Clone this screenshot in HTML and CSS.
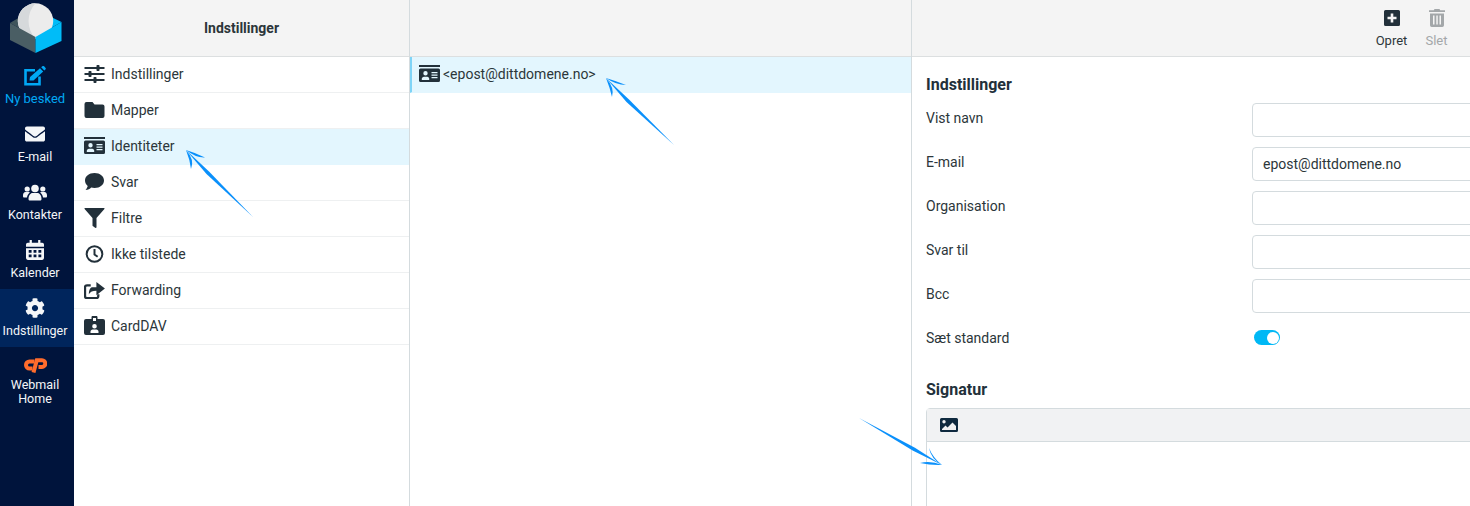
FILE: index.html
```html
<!DOCTYPE html>
<html lang="da">
<head>
<meta charset="utf-8">
<title>Indstillinger</title>
<link rel="stylesheet" href="styles.css">
</head>
<body>
<div class="app">
  <nav class="rail">
    <div class="logo">
      <svg viewBox="0 0 54 54" width="54" height="54">
        <path d="M2 23 12 17H27.500V37Z" fill="#3f545b"/>
        <path d="M53.500 22 43 17H27.500V37Z" fill="#00bcf8"/>
        <circle cx="27.500" cy="21" r="17.700" fill="#ececec"/>
        <path d="M27.500 3.300a17.700 17.700 0 0 0 0 35.400 26 26 0 0 1 0-35.400Z" fill="#d6d9db"/>
        <path d="M2 23 27.500 37V53L2 40Z" fill="#4a5e64"/>
        <path d="M53.500 22 27.500 37V53L53.500 41Z" fill="#00bcf8"/>
      </svg>
    </div>
    <a class="rail-item compose">
      <svg class="rail-icon" viewBox="0 0 24 20" width="24" height="20"><path d="M12 4.200H2.500v14h14V10.500" fill="none" stroke="currentColor" stroke-width="2.600"/><path d="M6.500 14.500 7 11 17 2.200 20.200 5.600 10.500 14.500Z M18.200 1.200 19.300.3a1.300 1.300 0 0 1 1.800 0l1.300 1.400a1.300 1.300 0 0 1 0 1.800l-1.100 1Z" fill="currentColor"/></svg>
      <span>Ny besked</span>
    </a>
    <a class="rail-item">
      <svg class="rail-icon" viewBox="0 0 512 512" width="20" height="20"><path fill="currentColor" d="M502.300 190.800c3.900-3.100 9.700-.2 9.700 4.700V400c0 26.500-21.500 48-48 48H48c-26.500 0-48-21.500-48-48V195.600c0-5 5.700-7.800 9.700-4.700 22.400 17.400 52.100 39.500 154.100 113.600 21.100 15.400 56.700 47.800 92.200 47.600 35.700.3 72-32.800 92.300-47.600 102-74.100 131.600-96.300 154-113.700zM256 320c23.200.4 56.600-29.200 73.400-41.400 132.700-96.300 142.800-104.700 173.400-128.700 5.800-4.500 9.200-11.500 9.200-18.900v-19c0-26.500-21.500-48-48-48H48C21.500 64 0 85.500 0 112v19c0 7.400 3.400 14.300 9.200 18.900 30.600 23.900 40.700 32.400 173.400 128.700 16.800 12.200 50.200 41.800 73.400 41.400z"/></svg>
      <span>E-mail</span>
    </a>
    <a class="rail-item">
      <svg class="rail-icon" viewBox="0 0 24 20" width="24" height="20"><g fill="currentColor"><circle cx="12" cy="6.500" r="3.800"/><circle cx="4.200" cy="7" r="2.600"/><circle cx="19.800" cy="7" r="2.600"/><path d="M5.500 17c0-3.500 2-6 4-6h5c2 0 4 2.500 4 6 0 1-.7 1.500-1.500 1.500H7c-.8 0-1.500-.5-1.500-1.500Z"/><path d="M0 13.500c0-2 1-3.500 2.500-3.500h3c.6 0 1.100.2 1.500.5-1.700 1-2.800 3-3 5H1.200C.5 15.500 0 15 0 14.200Z"/><path d="M24 13.500c0-2-1-3.500-2.500-3.500h-3c-.6 0-1.100.2-1.500.5 1.700 1 2.800 3 3 5h2.800c.7 0 1.200-.5 1.200-1.300Z"/></g></svg>
      <span>Kontakter</span>
    </a>
    <a class="rail-item">
      <svg class="rail-icon" viewBox="0 0 20 22" width="18" height="20"><path fill="currentColor" fill-rule="evenodd" d="M4 0h2.500v3h7V0H16v3h2a2 2 0 0 1 2 2v2.500H0V5a2 2 0 0 1 2-2h2ZM0 9h20v11a2 2 0 0 1-2 2H2a2 2 0 0 1-2-2ZM3 11v3h3.200v-3Zm5.400 0v3h3.200v-3Zm5.400 0v3H17v-3ZM3 16v3h3.200v-3Zm5.400 0v3h3.200v-3Zm5.400 0v3H17v-3Z"/></svg>
      <span>Kalender</span>
    </a>
    <a class="rail-item active">
      <svg class="rail-icon" viewBox="0 0 512 512" width="20" height="20"><path fill="currentColor" d="M487.400 315.700l-42.600-24.600c4.300-23.200 4.300-47 0-70.200l42.600-24.600c4.900-2.800 7.100-8.600 5.500-14-11.100-35.600-30-67.800-54.700-94.600-3.800-4.100-10-5.100-14.800-2.300L380.800 110c-17.900-15.400-38.500-27.300-60.800-35.100V25.800c0-5.600-3.900-10.500-9.400-11.700-36.700-8.200-74.300-7.800-109.200 0-5.500 1.200-9.400 6.100-9.400 11.700V75c-22.200 7.900-42.800 19.800-60.800 35.100L88.700 85.500c-4.900-2.800-11-1.900-14.800 2.300-24.700 26.700-43.600 58.900-54.700 94.600-1.700 5.400.6 11.200 5.500 14L67.300 221c-4.300 23.200-4.300 47 0 70.200l-42.600 24.600c-4.900 2.800-7.100 8.600-5.500 14 11.100 35.600 30 67.800 54.700 94.600 3.800 4.100 10 5.100 14.800 2.300l42.600-24.600c17.900 15.400 38.500 27.300 60.800 35.100v49.200c0 5.600 3.900 10.500 9.400 11.700 36.700 8.200 74.300 7.800 109.200 0 5.500-1.200 9.400-6.100 9.400-11.700v-49.200c22.200-7.900 42.800-19.800 60.800-35.100l42.600 24.600c4.900 2.800 11 1.900 14.800-2.300 24.700-26.700 43.600-58.900 54.700-94.600 1.500-5.500-.7-11.300-5.600-14.100zM256 336c-44.100 0-80-35.900-80-80s35.900-80 80-80 80 35.900 80 80-35.900 80-80 80z"/></svg>
      <span>Indstillinger</span>
    </a>
    <a class="rail-item home">
      <svg class="rail-icon" viewBox="0 0 24 16" width="24" height="16"><path d="M11.500 4.500H6.500a3.500 3.500 0 0 0 0 7H9.500" fill="none" stroke="#ff6c2c" stroke-width="4"/><path d="M10.500 15.500 13.800 3.300H19a3.300 3.300 0 0 1 0 6.600H15.500" fill="none" stroke="#ff6c2c" stroke-width="4"/></svg>
      <span>Webmail Home</span>
    </a>
  </nav>

  <section class="col col-sections">
    <header class="head head-title">Indstillinger</header>
    <ul class="list">
      <li class="row">
        <svg class="row-icon" viewBox="0 0 20 18" width="20" height="18"><g fill="#22303a"><path d="M0 2h20v2H0ZM0 8h20v2H0ZM0 14h20v2H0Z"/><rect x="12" y="0" width="3" height="6" rx=".8"/><rect x="4" y="6" width="3" height="6" rx=".8"/><rect x="9" y="12" width="3" height="6" rx=".8"/></g></svg>
        <span>Indstillinger</span>
      </li>
      <li class="row">
        <svg class="row-icon" viewBox="0 0 20 16" width="20" height="16"><path fill="#22303a" d="M2 0h6l2 2.500h8a2 2 0 0 1 2 2V14a2 2 0 0 1-2 2H2a2 2 0 0 1-2-2V2a2 2 0 0 1 2-2Z"/></svg>
        <span>Mapper</span>
      </li>
      <li class="row selected">
        <svg class="row-icon" viewBox="0 0 21 17" width="21" height="17"><use href="#idcard"/></svg>
        <span>Identiteter</span>
      </li>
      <li class="row">
        <svg class="row-icon" viewBox="0 0 20 18" width="20" height="18"><path fill="#22303a" d="M10 0c5.500 0 9.500 3.300 9.500 7.500S15.500 15 10 15c-1.200 0-2.300-.2-3.300-.5C5.500 15.700 3.500 17 1 17c1.300-1.400 2-3 2.200-4C1.500 11.500.5 9.600.5 7.500.5 3.300 4.500 0 10 0Z"/></svg>
        <span>Svar</span>
      </li>
      <li class="row">
        <svg class="row-icon" viewBox="0 0 20 20" width="20" height="20"><path fill="#22303a" d="M.5 0h19c.5 0 .8.600.4 1L12 10v9c0 .8-.8 1.200-1.400.8l-2-1.500A1.200 1.200 0 0 1 8 17.400V10L.1 1C-.3.600 0 0 .5 0Z"/></svg>
        <span>Filtre</span>
      </li>
      <li class="row">
        <svg class="row-icon" viewBox="0 0 20 20" width="18" height="18"><circle cx="10" cy="10" r="8.700" fill="none" stroke="#22303a" stroke-width="2.200"/><path d="M10 4.500v6l3.500 2.500" fill="none" stroke="#22303a" stroke-width="2.200"/></svg>
        <span>Ikke tilstede</span>
      </li>
      <li class="row">
        <svg class="row-icon" viewBox="0 0 22 19" width="21" height="18"><path fill="#22303a" d="M8 6.500h5V1l9 7-9 7v-4.800c-4 0-6.500 1-8 3.800C5 10 6 7.500 8 6.500Z"/><path fill="none" stroke="#22303a" stroke-width="2.400" d="M7 4.500H3a2 2 0 0 0-2 2V16a2 2 0 0 0 2 2h10a2 2 0 0 0 2-2v-2"/></svg>
        <span>Forwarding</span>
      </li>
      <li class="row">
        <svg class="row-icon" viewBox="0 0 21 19" width="21" height="19"><path fill="#22303a" fill-rule="evenodd" d="M2 3h5.500V1.200C7.500.5 8 0 8.700 0h3.600c.7 0 1.200.5 1.200 1.200V3H19a2 2 0 0 1 2 2v12a2 2 0 0 1-2 2H2a2 2 0 0 1-2-2V5a2 2 0 0 1 2-2Zm7-1v3h3V2Zm1.500 6a2.300 2.300 0 1 0 0 4.600 2.300 2.300 0 0 0 0-4.600ZM6.500 17h8v-1.500c0-1-1-2-2-2h-4c-1 0-2 1-2 2Z"/></svg>
        <span>CardDAV</span>
      </li>
    </ul>
  </section>

  <section class="col col-ids">
    <header class="head"></header>
    <ul class="list">
      <li class="row id-row selected">
        <svg class="row-icon" viewBox="0 0 21 17" width="21" height="17"><use href="#idcard"/></svg>
        <span>&lt;epost@dittdomene.no&gt;</span>
      </li>
    </ul>
  </section>

  <section class="col col-form">
    <header class="head head-tools">
      <a class="tool">
        <svg viewBox="0 0 16 16" width="16" height="16"><path fill="#22303a" fill-rule="evenodd" d="M1.500 0h13A1.500 1.500 0 0 1 16 1.500v13a1.500 1.500 0 0 1-1.500 1.500h-13A1.500 1.500 0 0 1 0 14.500v-13A1.500 1.500 0 0 1 1.500 0ZM6.700 3.500v3.200H3.500v2.600h3.200v3.200h2.600V9.300h3.200V6.700H9.300V3.500Z"/></svg>
        <span>Opret</span>
      </a>
      <a class="tool disabled">
        <svg viewBox="0 0 16 18" width="16" height="18"><path fill="#a3a7a9" fill-rule="evenodd" d="M5.500 0h5l.7 1.300H16v1.800H0V1.300h4.800ZM1 4.500h14V16.300a1.700 1.700 0 0 1-1.700 1.700H2.700A1.700 1.700 0 0 1 1 16.300ZM4 6.500v9h1.500v-9Zm3.300 0v9h1.500v-9Zm3.200 0v9H12v-9Z"/></svg>
        <span>Slet</span>
      </a>
    </header>
    <div class="form">
      <h2>Indstillinger</h2>
      <div class="field"><label>Vist navn</label><input class="input" type="text"></div>
      <div class="field"><label>E-mail</label><input class="input" type="text" value="epost@dittdomene.no"></div>
      <div class="field"><label>Organisation</label><input class="input" type="text"></div>
      <div class="field"><label>Svar til</label><input class="input" type="text"></div>
      <div class="field"><label>Bcc</label><input class="input" type="text"></div>
      <div class="field toggle-field"><label>Sæt standard</label><span class="toggle"></span></div>
      <h2 class="sig">Signatur</h2>
      <div class="editor">
        <div class="editor-bar">
          <svg viewBox="0 0 18 14" width="18" height="14"><path fill="#0f2a3f" fill-rule="evenodd" d="M1.500 0h15A1.500 1.500 0 0 1 18 1.500v11a1.500 1.500 0 0 1-1.500 1.500h-15A1.500 1.500 0 0 1 0 12.500v-11A1.500 1.500 0 0 1 1.500 0ZM4 2a1.700 1.700 0 1 0 0 3.400A1.700 1.700 0 0 0 4 2ZM2 12h14V8l-3.500-3.500L7.500 9.500 5.500 7.500 2 11Z"/></svg>
        </div>
      </div>
    </div>
  </section>
</div>

<svg class="defs" width="0" height="0">
  <symbol id="idcard" viewBox="0 0 21 17">
    <path fill="#22303a" fill-rule="evenodd" d="M0 0h21v2H0ZM1.500 3.500h18A1.500 1.500 0 0 1 21 5v10.500a1.500 1.500 0 0 1-1.500 1.500h-18A1.500 1.500 0 0 1 0 15.500V5a1.500 1.500 0 0 1 1.500-1.500ZM6.500 6a2.200 2.200 0 1 0 0 4.400 2.200 2.200 0 0 0 0-4.400ZM2.800 15h7.400v-1.200c0-1-.8-2-2-2H5c-1.200 0-2.200 1-2.200 2ZM12.500 7v1.200h6V7Zm0 2.500v1.200h6V9.500Zm0 2.500v1.200h6V12Z"/>
  </symbol>
</svg>

<svg class="arrows" width="1470" height="506" viewBox="0 0 1470 506">
  <g fill="#0a90fb">
    <path d="M186 150 209 171.500 253 217 206.500 174Z"/>
    <path d="M186 150Q196 158 205 157.500Q196 153 186 150Z"/>
    <path d="M186 150Q190 160 191 169Q195 160 186 150Z"/>
    <path d="M606 78 629 99.500 674 145 626.500 102Z"/>
    <path d="M606 78Q616 85 626 85Q616 81 606 78Z"/>
    <path d="M606 78Q610 88 612 97Q615 88 606 78Z"/>
    <path d="M942 465 914.900 447.800 859 418 913.100 450.800Z"/>
    <path d="M942 465Q931 460.500 920 463Q931 465.500 942 465Z"/>
    <path d="M942 465Q933 458 929 448Q931 459 942 465Z"/>
  </g>
</svg>
</body>
</html>
```

FILE: styles.css
```css
* { box-sizing: border-box; }
html, body { margin: 0; height: 100%; overflow: hidden; }
body { font-family: Roboto, "Liberation Sans", sans-serif; font-size: 14px; color: #2c363a; background: #fff; }
a { color: inherit; text-decoration: none; }
ul { list-style: none; margin: 0; padding: 0; }

.app { display: flex; width: 1470px; height: 506px; overflow: hidden; }

.rail { width: 74px; flex: none; background: #00143c; color: #f4f6f8; display: flex; flex-direction: column; }
.logo { height: 57px; padding-left: 8px; }
.rail-item { height: 58px; display: flex; flex-direction: column; align-items: center; padding: 9px 4px 0 0; font-size: 12.5px; line-height: 14px; text-align: center; }
.rail-icon { height: 20px; flex: none; margin-bottom: 6px; }
.rail-item.compose { color: #00a8f5; font-size: 13px; }
.rail-item.active { background: #00255c; }
.rail-item.home .rail-icon { height: 16px; margin-top: 1px; margin-bottom: 5px; }
.rail-item.home span { width: 60px; }

.col { display: flex; flex-direction: column; flex: none; height: 100%; border-right: 1px solid #d4dbde; }
.col-sections { width: 336px; }
.col-ids { width: 502px; }
.col-form { flex: 1; min-width: 0; border-right: 0; overflow: hidden; }

.head { height: 57px; flex: none; background: #f4f4f4; border-bottom: 1px solid #dcdfe0; }
.head-title { display: flex; align-items: center; justify-content: center; font-weight: 700; font-size: 14px; color: #2c363a; }
.head-tools { display: flex; justify-content: flex-end; align-items: flex-start; padding-right: 11px; }

.tool { width: 45px; display: flex; flex-direction: column; align-items: center; padding-top: 9px; font-size: 13px; line-height: 14px; gap: 7px; color: #2c363a; }
.tool svg { height: 18px; }
.tool.disabled { color: #a3a7a9; }

.row { height: 36px; display: flex; align-items: center; gap: 6px; padding: 0 0 2px 10px; border-bottom: 1px solid #eef0f1; font-size: 14px; color: #2c363a; }
.row-icon { flex: none; width: 21px; }
.row.selected { background: #e3f6fe; border-bottom-color: #e3f6fe; }
.id-row { border-left: 2px solid #7fd4f7; padding-left: 7px; gap: 3px; }

.form { padding: 0 0 0 14px; width: 700px; }
.form h2 { margin: 0; font-size: 16px; line-height: 20px; font-weight: 700; color: #22303a; padding-top: 18px; padding-bottom: 7px; }
.field { height: 44px; display: flex; align-items: flex-start; }
.field label { width: 326px; flex: none; padding-top: 8px; line-height: 17px; }
.input { width: 360px; height: 34px; margin: 1px 0 0; padding: 0 10px; border: 1px solid #d4dbde; border-radius: 4px; font: 14px Roboto, "Liberation Sans", sans-serif; color: #2c363a; background: #fff; }
.toggle { width: 26px; height: 15px; margin: 8px 0 0 2px; border-radius: 8px; background: #00b8f5; position: relative; }
.toggle::after { content: ""; position: absolute; right: 1.500px; top: 1.500px; width: 12px; height: 12px; border-radius: 50%; background: #fff; }
.form h2.sig { padding-top: 14px; padding-bottom: 8px; }
.editor { width: 700px; height: 110px; border: 1px solid #d4dbde; border-radius: 4px 4px 0 0; }
.editor-bar { height: 33px; background: #f1f2f3; border-bottom: 1px solid #d4dbde; display: flex; align-items: center; padding-left: 13px; }

.defs { position: absolute; }
.arrows { position: absolute; left: 0; top: 0; pointer-events: none; }
```
